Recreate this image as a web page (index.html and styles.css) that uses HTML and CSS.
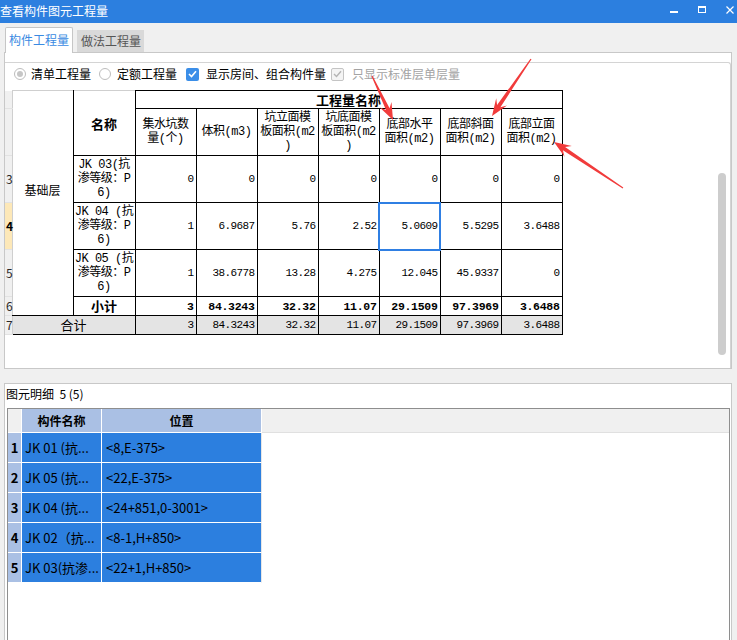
FILE: index.html
```html
<!DOCTYPE html>
<html lang="zh-CN">
<head>
<meta charset="utf-8">
<title>查看构件图元工程量</title>
<link rel="stylesheet" href="styles.css">
</head>
<body>
<div class="window">
  <header class="titlebar">
    <span class="title">查看构件图元工程量</span>
    <div class="winctl">
      <svg class="wbtn" width="8" height="8" viewBox="0 0 8 8"><rect x="0" y="5" width="8" height="2" fill="#fff"/></svg>
      <svg class="wbtn" width="8" height="8" viewBox="0 0 8 8"><rect x="0.5" y="0.5" width="7" height="6" fill="none" stroke="#fff"/><rect x="0" y="0" width="8" height="2" fill="#fff"/></svg>
      <svg class="wbtn" width="8" height="8" viewBox="0 0 8 8"><path d="M0.5 0.5L7.5 7.5M7.5 0.5L0.5 7.5" stroke="#fff" stroke-width="1.2"/></svg>
    </div>
  </header>

  <nav class="tabs">
    <div class="tab active">构件工程量</div>
    <div class="tab">做法工程量</div>
  </nav>

  <section class="tabpanel">
    <div class="groupbox">
      <div class="main">
        <div class="options">
          <label class="opt opt1"><span class="radio on"></span>清单工程量</label>
          <label class="opt opt2"><span class="radio"></span>定额工程量</label>
          <label class="opt opt3"><span class="cb on"><svg width="9" height="8" viewBox="0 0 9 8"><path d="M1 4l2.5 2.5L8 1.2" fill="none" stroke="#fff" stroke-width="1.6"/></svg></span>显示房间、组合构件量</label>
          <label class="opt opt4 dis"><span class="cb off"><svg width="9" height="8" viewBox="0 0 9 8"><path d="M1 4l2.5 2.5L8 1.2" fill="none" stroke="#b4b4b4" stroke-width="1.4"/></svg></span>只显示标准层单层量</label>
        </div>

        <table class="qty">
          <colgroup>
            <col class="w-rh"><col class="w-base"><col class="w-name">
            <col class="w-d"><col class="w-d"><col class="w-d"><col class="w-d"><col class="w-d"><col class="w-d"><col class="w-d">
          </colgroup>
          <tbody>
            <tr class="h1">
              <td class="rh"></td>
              <td class="base" rowspan="6">基础层</td>
              <td class="namehd" rowspan="2">名称</td>
              <td class="grouphd" colspan="7">工程量名称</td>
            </tr>
            <tr class="h2">
              <td class="rh"></td>
              <td class="colhd">集水坑数<br>量(个)</td>
              <td class="colhd">体积(m3)</td>
              <td class="colhd">坑立面模<br>板面积(m2<br>)</td>
              <td class="colhd">坑底面模<br>板面积(m2<br>)</td>
              <td class="colhd">底部水平<br>面积(m2)</td>
              <td class="colhd">底部斜面<br>面积(m2)</td>
              <td class="colhd">底部立面<br>面积(m2)</td>
            </tr>
            <tr class="dr">
              <td class="rh">3</td>
              <td class="nm">JK 03(抗<br>渗等级：P<br>6)</td>
              <td class="num">0</td><td class="num">0</td><td class="num">0</td><td class="num">0</td><td class="num">0</td><td class="num">0</td><td class="num">0</td>
            </tr>
            <tr class="dr cur">
              <td class="rh">4</td>
              <td class="nm">JK 04 (抗<br>渗等级：P<br>6)</td>
              <td class="num">1</td><td class="num">6.9687</td><td class="num">5.76</td><td class="num">2.52</td><td class="num sel">5.0609</td><td class="num">5.5295</td><td class="num">3.6488</td>
            </tr>
            <tr class="dr">
              <td class="rh">5</td>
              <td class="nm">JK 05 (抗<br>渗等级：P<br>6)</td>
              <td class="num">1</td><td class="num">38.6778</td><td class="num">13.28</td><td class="num">4.275</td><td class="num">12.045</td><td class="num">45.9337</td><td class="num">0</td>
            </tr>
            <tr class="sub">
              <td class="rh">6</td>
              <td class="subhd">小计</td>
              <td class="num">3</td><td class="num">84.3243</td><td class="num">32.32</td><td class="num">11.07</td><td class="num">29.1509</td><td class="num">97.3969</td><td class="num">3.6488</td>
            </tr>
            <tr class="tot">
              <td class="rh">7</td>
              <td class="tothd" colspan="2">合计</td>
              <td class="num">3</td><td class="num">84.3243</td><td class="num">32.32</td><td class="num">11.07</td><td class="num">29.1509</td><td class="num">97.3969</td><td class="num">3.6488</td>
            </tr>
          </tbody>
        </table>
      </div>
      <div class="vscroll"><div class="thumb"></div></div>
    </div>
  </section>

  <div class="splitter"></div>

  <section class="detail">
    <div class="detail-label">图元明细&nbsp;&nbsp;5 (5)</div>
    <div class="dgrid">
      <div class="drow dhead">
        <div class="d-rh"></div>
        <div class="d-c1">构件名称</div>
        <div class="d-c2">位置</div>
        <div class="d-fill"></div>
      </div>
      <div class="drow"><div class="d-rh">1</div><div class="d-c1">JK 01 (抗...</div><div class="d-c2">&lt;8,E-375&gt;</div></div>
      <div class="drow"><div class="d-rh">2</div><div class="d-c1">JK 05 (抗...</div><div class="d-c2">&lt;22,E-375&gt;</div></div>
      <div class="drow"><div class="d-rh">3</div><div class="d-c1">JK 04 (抗...</div><div class="d-c2">&lt;24+851,0-3001&gt;</div></div>
      <div class="drow"><div class="d-rh">4</div><div class="d-c1">JK 02（抗...</div><div class="d-c2">&lt;8-1,H+850&gt;</div></div>
      <div class="drow"><div class="d-rh">5</div><div class="d-c1">JK 03(抗渗...</div><div class="d-c2">&lt;22+1,H+850&gt;</div></div>
    </div>
  </section>
</div>

<svg class="arrows" width="737" height="640" viewBox="0 0 737 640">
  <polygon points="371.5,76.3 386,110 379.8,107.5 393,120 391.5,101.9 389.6,108.3 372.5,75.7"/>
  <polygon points="530.5,58.7 497.1,105 496.2,98.3 492,116 507,105.6 500.4,107.2 531.5,59.3"/>
  <polygon points="623.3,187.5 565.1,147 571.8,146 554,142 564.5,156.8 562.9,150.3 622.7,188.5"/>
</svg>
</body>
</html>
```

FILE: styles.css
```css
html, body {
  margin: 0;
  padding: 0;
}
body {
  width: 737px;
  height: 640px;
  overflow: hidden;
  position: relative;
  background: #f0f0f0;
  font-family: "Noto Sans CJK SC", "Noto Sans", sans-serif;
  font-size: 12px;
  color: #000;
}
.window {
  display: flex;
  flex-direction: column;
  height: 640px;
}

/* title bar */
.titlebar {
  flex: none;
  height: 23px;
  background: #2c7fdf;
  color: #fff;
  display: flex;
  justify-content: space-between;
  align-items: flex-start;
}
.title {
  font-size: 12px;
  line-height: 21px;
}
.winctl {
  display: flex;
  align-items: flex-start;
  gap: 20px;
  padding: 6px 3px 0 0;
}
.wbtn { display: block; }

/* tabs */
.tabs {
  flex: none;
  height: 29px;
  display: flex;
  align-items: flex-end;
  gap: 4px;
  padding-left: 5px;
  position: relative;
  z-index: 1;
}
.tab {
  height: 22px;
  line-height: 21px;
  padding: 0 3px 0 4px;
  background: #d9d9d9;
  color: #555;
  box-sizing: border-box;
}
.tab.active {
  height: 26px;
  line-height: 24px;
  padding: 0 3px;
  background: #fff;
  color: #3a8ae2;
  border: 1px solid #c6c6c6;
  border-bottom: none;
  border-radius: 2px 2px 0 0;
  margin-bottom: -1px;
}

/* upper panel */
.tabpanel {
  flex: none;
  height: 317px;
  box-sizing: border-box;
  margin: 0 5px 0 4px;
  border: 1px solid #c8c8c8;
  background: #fff;
  padding-top: 9px;
  display: flex;
  flex-direction: column;
}
.groupbox {
  flex: 1;
  display: flex;
  border-top: 1px solid #d4d4d4;
  border-right: 1px solid #d4d4d4;
  border-top-right-radius: 3px;
}
.main {
  flex: 1;
  min-width: 0;
}
.vscroll {
  flex: none;
  width: 13px;
}
.thumb {
  width: 8px;
  height: 182px;
  margin: 110px 0 0 1px;
  border-radius: 4px;
  background: #cdcdcd;
}

/* options */
.options {
  display: flex;
  align-items: center;
  height: 22px;
  margin-bottom: 5px;
  padding-left: 9px;
  white-space: nowrap;
  line-height: 16px;
}
.opt {
  display: flex;
  align-items: center;
}
.opt1 { gap: 5px; margin-right: 8px; }
.opt2 { gap: 6px; margin-right: 9px; }
.opt3 { gap: 7px; margin-right: 5px; }
.opt4 { gap: 8px; }
.opt.dis { color: #a3a3a3; }
.radio {
  flex: none;
  width: 12px;
  height: 12px;
  box-sizing: border-box;
  border: 1px solid #bdbdbd;
  border-radius: 50%;
  background: #fff;
  display: flex;
  align-items: center;
  justify-content: center;
}
.radio.on::after {
  content: "";
  width: 6px;
  height: 6px;
  border-radius: 50%;
  background: #c6c6c6;
}
.cb {
  flex: none;
  width: 13px;
  height: 13px;
  box-sizing: border-box;
  border-radius: 2px;
  display: flex;
  align-items: center;
  justify-content: center;
}
.cb.on { background: #3b8ee8; }
.cb.off { border: 1px solid #c4c4c4; background: #f4f4f4; }

/* quantity table */
.qty {
  border-collapse: collapse;
  table-layout: fixed;
  width: 557px;
  font-size: 12px;
}
.w-rh { width: 7px; }
.w-base { width: 61px; }
.w-name { width: 62px; }
.w-d { width: 61px; }
.qty td {
  border: 1px solid #000;
  padding: 0 2px;
  white-space: nowrap;
  overflow: hidden;
}
.qty tr.h1 { height: 18px; }
.qty tr.h2 { height: 47px; }
.qty tr.dr { height: 47px; }
.qty tr.sub { height: 19px; }
.qty tr.tot { height: 19px; }

.qty td.rh {
  border: none;
  border-bottom: 1px solid #e2e2e2;
  background: #f0f0f0;
  padding: 0 0 0 1px;
  overflow: visible;
  color: #2a2a2a;
  font-size: 12px;
  line-height: 14px;
}
.qty tr.cur td.rh {
  background: #fde8b8;
  font-weight: bold;
  color: #000;
}
.qty td.base {
  border-left-color: #cfcfcf;
  border-top-color: #cfcfcf;
  vertical-align: top;
  text-align: center;
  padding-top: 91px;
  line-height: 15px;
}
.qty td.namehd {
  border-top-color: #cfcfcf;
  text-align: center;
  font-weight: bold;
  font-size: 13px;
}
.qty td.grouphd {
  text-align: center;
  font-weight: bold;
  font-size: 13px;
  line-height: 16px;
}
.qty td.colhd {
  text-align: center;
  padding: 0;
  font-family: "Liberation Mono", "Noto Sans CJK SC", monospace;
  letter-spacing: -0.5px;
  line-height: 14px;
}
.qty td.nm {
  text-align: center;
  padding: 0;
  font-family: "Liberation Mono", "Noto Sans CJK SC", monospace;
  letter-spacing: -0.5px;
  line-height: 14px;
}
.qty td.num {
  text-align: right;
  padding: 0 2px 0 0;
  font-family: "Liberation Mono", monospace;
  font-size: 11px;
  letter-spacing: -0.6px;
}
.qty td.sel {
  outline: 2px solid #2f7fe3;
  outline-offset: -1px;
}
.qty tr.sub td.num {
  font-weight: bold;
  font-size: 11.5px;
  letter-spacing: -0.3px;
}
.qty td.subhd {
  text-align: center;
  font-weight: bold;
  font-size: 13px;
  line-height: 16px;
}
.qty tr.tot td.num,
.qty td.tothd {
  background: #e4e4e4;
}
.qty td.tothd {
  border-left-color: #cfcfcf;
  text-align: center;
  font-size: 13px;
  line-height: 16px;
}

/* splitter + lower panel */
.splitter {
  flex: none;
  height: 14px;
}
.detail {
  flex: 1;
  min-height: 0;
  margin: 0 5px 0 4px;
  border: 1px solid #c8c8c8;
  border-bottom: none;
  background: #fff;
  display: flex;
  flex-direction: column;
}
.detail-label {
  flex: none;
  height: 24px;
  line-height: 20px;
  padding-left: 1px;
  white-space: pre;
}
.dgrid {
  flex: 1;
  margin: 0 1px 0 2px;
  border: 1px solid #8e8e8e;
  border-bottom: none;
  background: #fff;
}
.drow {
  display: flex;
  height: 30px;
}
.drow > div {
  box-sizing: border-box;
  border-bottom: 1px solid #fff;
  white-space: nowrap;
  overflow: hidden;
}
.d-rh {
  flex: none;
  width: 14px;
  border-right: 1px solid #fff;
  background: #aac0e4;
  text-align: center;
  font-weight: bold;
  font-size: 13px;
  line-height: 29px;
}
.d-c1 {
  flex: none;
  width: 80px;
  border-right: 1px solid #fff;
  background: #2c7fdf;
  padding-left: 3px;
  font-size: 13px;
  line-height: 29px;
}
.d-c2 {
  flex: none;
  width: 160px;
  border-right: 1px solid #e6e6e6;
  background: #2c7fdf;
  padding-left: 4px;
  font-size: 13px;
  line-height: 29px;
}
.drow.dhead {
  height: 24px;
}
.dhead .d-rh {
  background: #f0f0f0;
}
.dhead .d-c1,
.dhead .d-c2 {
  background: #aac0e4;
  border-right-color: #fff;
  padding-left: 0;
  text-align: center;
  font-weight: bold;
  font-size: 12px;
  line-height: 23px;
}
.dhead .d-fill {
  flex: 1;
  background: #f0f0f0;
  border-bottom-color: #e0e0e0;
}

/* red annotation arrows */
.arrows {
  position: absolute;
  left: 0;
  top: 0;
  pointer-events: none;
}
.arrows polygon {
  fill: #f13b3b;
}
```
